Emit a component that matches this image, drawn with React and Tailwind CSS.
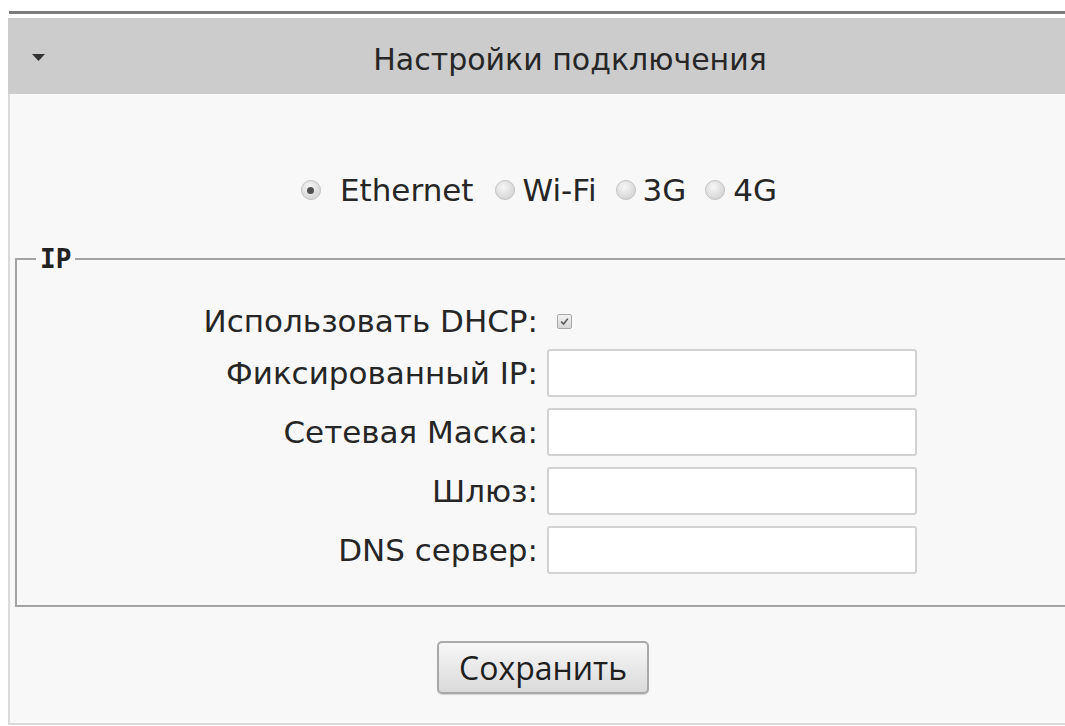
export default function App() {
  const fields = [
    "Фиксированный IP:",
    "Сетевая Маска:",
    "Шлюз:",
    "DNS сервер:",
  ];
  const nets = [
    { name: "Ethernet", radioMl: "ml-0", textMl: "ml-[19px]" },
    { name: "Wi-Fi", radioMl: "ml-[21px]", textMl: "ml-[8px]" },
    { name: "3G", radioMl: "ml-[19px]", textMl: "ml-[7px]" },
    { name: "4G", radioMl: "ml-[19px]", textMl: "ml-[8px]" },
  ];

  return (
    <div className="relative h-[726px] w-[1065px] overflow-hidden bg-white pl-[8px] pt-[11px] font-['DejaVu_Sans',sans-serif] text-[#262626]">
      {/* top rule */}
      <div className="ml-[1px] h-[3px] w-[1130px] bg-[#7c7c7c]" />

      <div className="mt-[4px] h-[707px] w-[1124px] border-b-2 border-l-2 border-[#dadada] bg-[#f8f8f8]">
        {/* header */}
        <div className="relative -ml-[2px] flex h-[76px] items-center justify-center bg-[#cccccc] pt-[8px]">
          <svg
            className="absolute left-[24px] top-[36px]"
            width="13"
            height="7"
            viewBox="0 0 13 7"
          >
            <path d="M0 0 L13 0 L6.5 7 Z" fill="#333" />
          </svg>
          <span className="text-[30px] leading-[36px]">Настройки подключения</span>
        </div>

        {/* connection type */}
        <div className="flex h-[114px] items-end justify-center pr-[64px] text-[31px] leading-[36px]">
          <div className="flex items-center">
            {nets.map((n, i) => (
              <label key={n.name} className="flex items-center">
                <span
                  className={
                    "inline-flex h-[20px] w-[20px] items-center justify-center rounded-full border border-[#c2c2c2] bg-[radial-gradient(circle_at_40%_35%,#f6f6f6,#cbcbcb)] " +
                    n.radioMl
                  }
                >
                  {i === 0 && (
                    <span className="h-[7px] w-[7px] rounded-full bg-[#505050]" />
                  )}
                </span>
                <span className={n.textMl}>{n.name}</span>
              </label>
            ))}
          </div>
        </div>

        {/* IP settings */}
        <fieldset className="ml-[5px] mt-[37px] w-[1200px] border-2 border-[#a3a3a3] px-0 pb-[31px] pt-[30px]">
          <legend className="ml-[19px] px-[4px] font-['DejaVu_Sans_Mono',monospace] text-[26px] font-bold leading-[28px] text-[#222]">
            IP
          </legend>

          <div className="flex h-[36px] items-center text-[31px]">
            <span className="w-[521px] text-right">Использовать DHCP:</span>
            <span className="ml-[19px] inline-flex h-[15px] w-[15px] items-center justify-center rounded-[2px] border border-[#a8a8a8] bg-[linear-gradient(#f2f2f2,#d6d6d6)]">
              <svg width="11" height="11" viewBox="0 0 11 11">
                <path d="M2.2 5.6 L4.6 8 L8.8 2.6" fill="none" stroke="#555" strokeWidth="1.5" />
              </svg>
            </span>
          </div>

          <div className="mt-[10px] flex flex-col gap-[11px]">
            {fields.map((f) => (
              <div key={f} className="flex items-center text-[31px]">
                <span className="w-[521px] text-right">{f}</span>
                <input
                  type="text"
                  className="ml-[9px] h-[48px] w-[370px] rounded-[3px] border-2 border-[#d2d2d2] bg-white outline-none"
                />
              </div>
            ))}
          </div>
        </fieldset>

        {/* save */}
        <div className="mt-[34px] flex justify-center pr-[56px]">
          <button className="h-[53px] w-[212px] rounded-[5px] border-2 border-[#a9a9a9] bg-[linear-gradient(#f7f7f7,#dadada)] font-['Open_Sans',sans-serif] text-[32px] leading-[36px] text-[#1e1e1e] shadow-[0_1px_1px_rgba(0,0,0,0.15)]">
            Сохранить
          </button>
        </div>
      </div>
    </div>
  );
}
